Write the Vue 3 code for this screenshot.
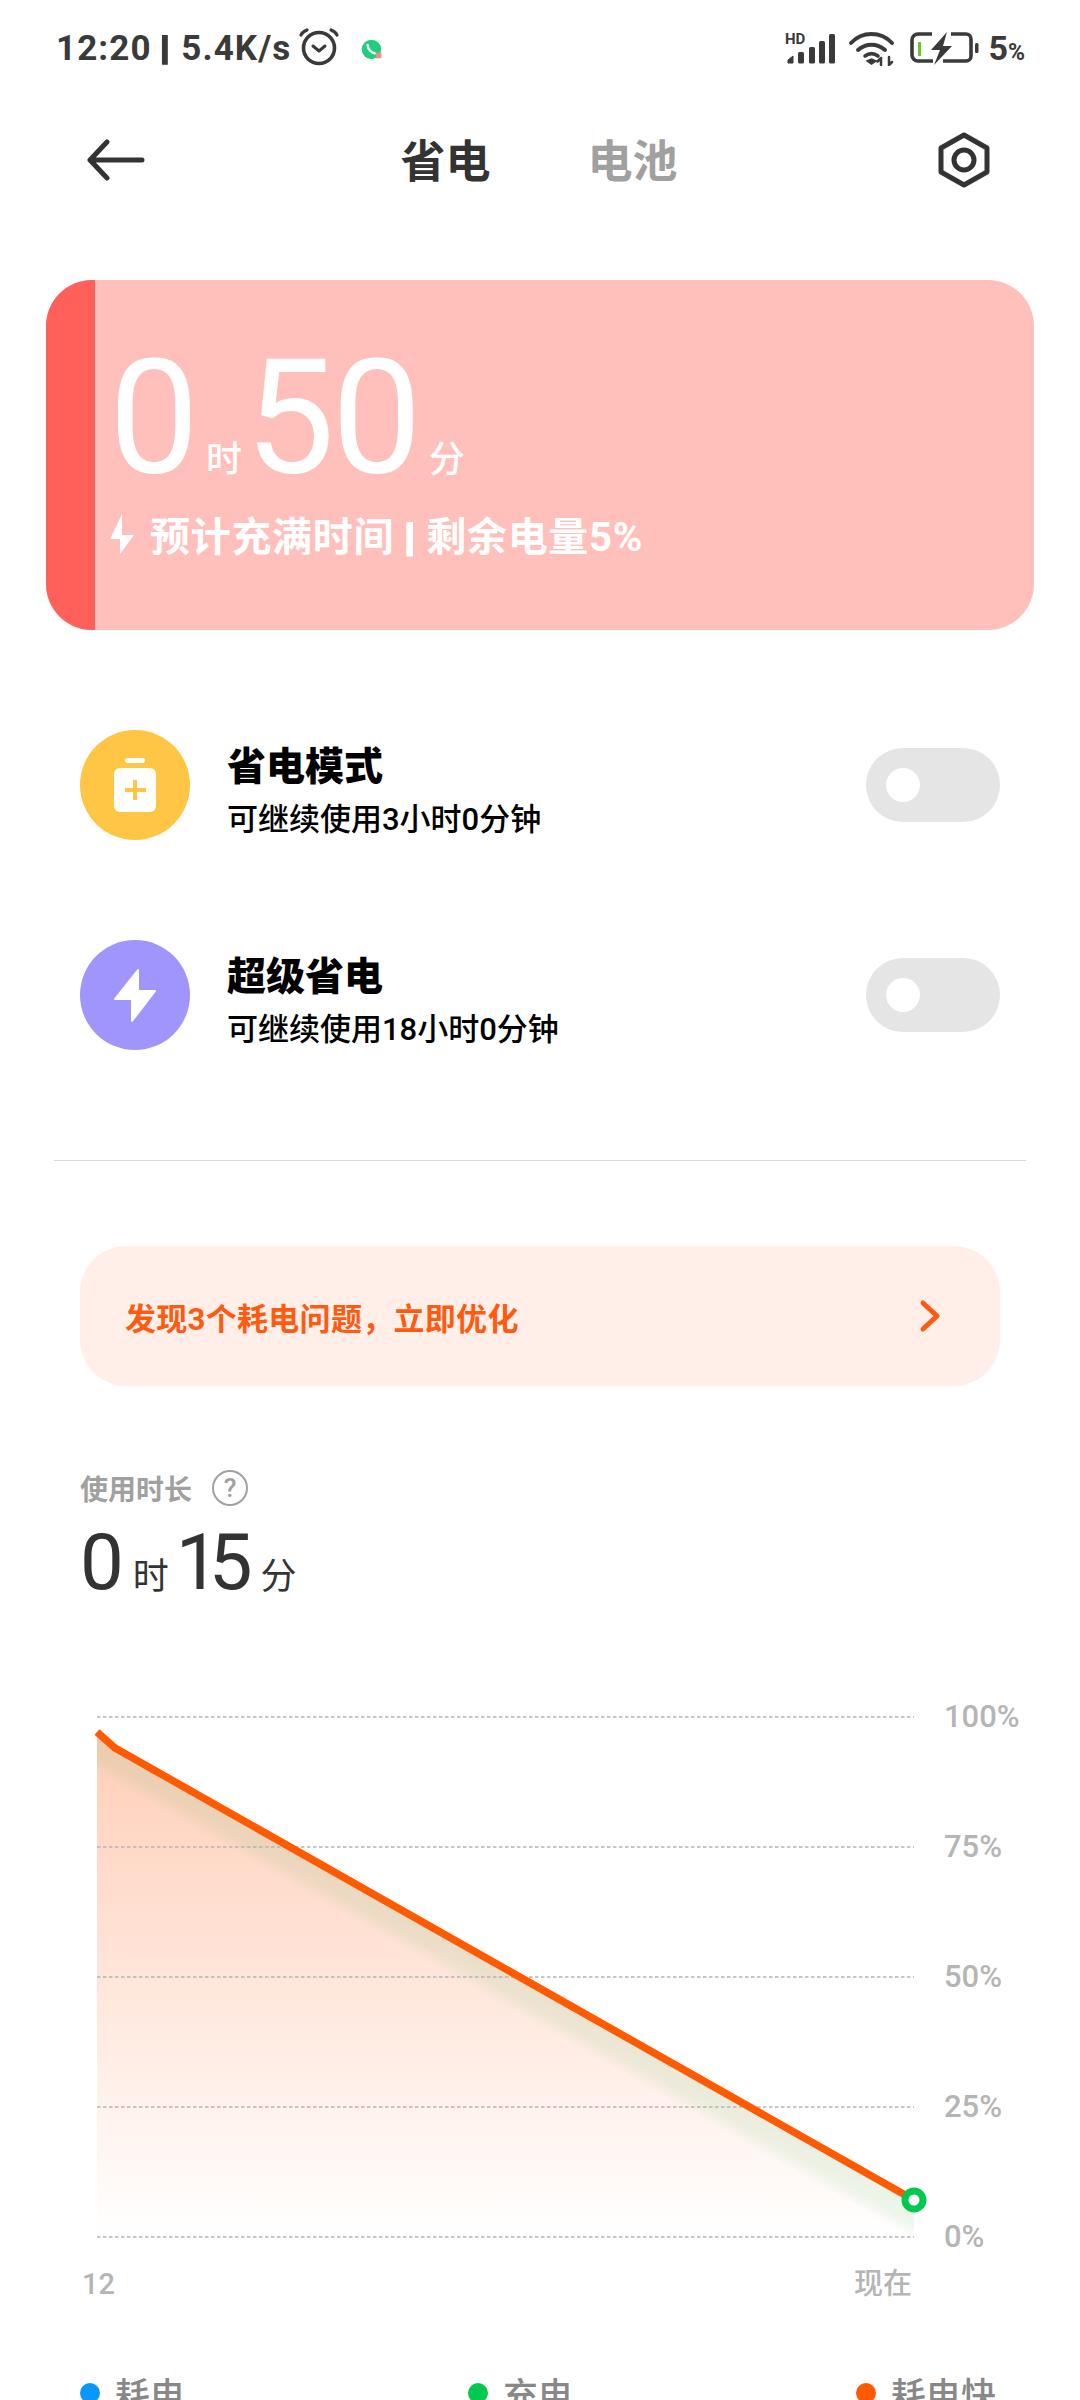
<script setup>
const rows = [
  { title: '省电模式', sub: '可继续使用3小时0分钟', color: '#ffc544', icon: 'plus' },
  { title: '超级省电', sub: '可继续使用18小时0分钟', color: '#a095fd', icon: 'bolt' },
];
const grid = [
  { y: 17, label: '100%' },
  { y: 147, label: '75%' },
  { y: 277, label: '50%' },
  { y: 407, label: '25%' },
  { y: 537, label: '0%' },
];
const legend = [
  { text: '耗电', color: '#0a96ff' },
  { text: '充电', color: '#00ca4e' },
  { text: '耗电快', color: '#ff5a00' },
];
</script>

<template>
  <div class="page">
    <div class="status">
      <div class="status-left">
        <span class="clock">12:20 <i class="sep">|</i> 5.4K/s</span>
        <svg class="alarm" width="42" height="40" viewBox="0 0 42 40" fill="none" stroke="#3a3a3a" stroke-linecap="round">
          <circle cx="21" cy="22" r="15.5" stroke-width="3.6" />
          <path d="M15 20l6 5 6-5" stroke-width="3" stroke-linejoin="round" />
          <path d="M3 9c1-2 3-4 6-5M39 9c-1-2-3-4-6-5" stroke-width="3.2" />
        </svg>
        <svg class="chat" width="22" height="22" viewBox="0 0 20 20">
          <circle cx="9.5" cy="9.5" r="8.8" fill="#1fcf7c" />
          <path d="M6 5.5c.5 3.5 3 6.5 6.500 7.500" fill="none" stroke="#fff" stroke-width="2.2" stroke-linecap="round" />
          <rect x="13.5" y="12.5" width="5" height="5" fill="#ee8f8a" />
        </svg>
      </div>
      <div class="status-right">
        <svg class="signal" width="52" height="34" viewBox="0 0 52 34">
          <text x="0" y="13" class="hd">HD</text>
          <path d="M3 32v-3l5-4v7z" fill="#3a3a3a" stroke="#3a3a3a" stroke-width="1" stroke-linejoin="round" />
          <rect x="13" y="21" width="6" height="11.500" rx="1.500" fill="#3a3a3a" />
          <rect x="24" y="16" width="6" height="16.500" rx="1.500" fill="#3a3a3a" />
          <rect x="34" y="10" width="6" height="22.500" rx="1.500" fill="#3a3a3a" />
          <rect x="44" y="3" width="6" height="29.500" rx="1.500" fill="#3a3a3a" />
        </svg>
        <svg class="wifi" width="48" height="36" viewBox="0 0 48 36" fill="none" stroke="#3a3a3a" stroke-width="4" stroke-linecap="round">
          <path d="M3 13C14 1 33 1 44 13" />
          <path d="M10 20c8-7 19-7 27 0" />
          <path d="M17 26c4-3 9-3 13 0" stroke-width="3.6" />
          <path d="M19 31l4.500 3 4.500-3-4.500-2z" fill="#3a3a3a" stroke-width="1.500" />
          <path d="M33 28v7M29.500 31.500L33 28M41 27v8M41 35l3-3" stroke-width="2.500" />
        </svg>
        <svg class="battery" width="70" height="34" viewBox="0 0 70 34" fill="none">
          <path d="M22 3H8a6 6 0 0 0-6 6v15a6 6 0 0 0 6 6h15M41 3h15a5 5 0 0 1 5 5v17a5 5 0 0 1-5 5H33" stroke="#3a3a3a" stroke-width="3.600" />
          <rect x="8" y="11" width="3" height="14" fill="#6cc52d" />
          <path d="M37 1L21 19h9l-6 15 18-19h-9z" fill="#3a3a3a" />
          <rect x="65" y="12" width="3.500" height="10" rx="1.500" fill="#3a3a3a" />
        </svg>
        <span class="pct">5<small>%</small></span>
      </div>
    </div>

    <div class="nav">
      <svg class="back" width="60" height="42" viewBox="0 0 60 42" fill="none" stroke="#333" stroke-width="5" stroke-linecap="round" stroke-linejoin="round">
        <path d="M56 21H4M21 3L4 21l17 18" />
      </svg>
      <div class="tabs">
        <span class="tab active">省电</span>
        <span class="tab">电池</span>
      </div>
      <svg class="gear" width="54" height="56" viewBox="0 0 54 56" fill="none" stroke="#333">
        <path d="M27 3l23 13v24L27 53 4 40V16z" stroke-width="5" stroke-linejoin="round" />
        <circle cx="27" cy="28" r="10" stroke-width="5" />
      </svg>
    </div>

    <div class="card">
      <div class="card-strip"></div>
      <div class="card-body">
        <div class="big-time">
          <span class="num">0</span><span class="unit">时</span><span class="num">50</span><span class="unit">分</span>
        </div>
        <div class="card-note">
          <svg width="26" height="40" viewBox="0 0 26 40">
            <path d="M13 0v21h12L11 40V25H1z" fill="#fff" />
          </svg>
          <span>预计充满时间 <i class="sep">|</i> 剩余电量5%</span>
        </div>
      </div>
    </div>

    <div class="rows">
      <div v-for="r in rows" :key="r.title" class="row">
        <div class="row-icon" :style="{ background: r.color }">
          <svg v-if="r.icon === 'plus'" width="44" height="54" viewBox="0 0 44 54">
            <rect x="12" y="0" width="20" height="5" rx="2.500" fill="#fff" />
            <rect x="1" y="10" width="42" height="44" rx="6" fill="#fff" />
            <path d="M22 22v20M12 32h21" stroke="#ffc544" stroke-width="4" />
          </svg>
          <svg v-else width="44" height="54" viewBox="0 0 44 54">
            <path d="M25 2L2 31h17v22l23-30H25z" fill="#fff" stroke="#fff" stroke-width="2" stroke-linejoin="round" />
          </svg>
        </div>
        <div class="row-text">
          <div class="row-title">{{ r.title }}</div>
          <div class="row-sub">{{ r.sub }}</div>
        </div>
        <div class="toggle"><span class="knob"></span></div>
      </div>
    </div>

    <div class="divider"></div>

    <div class="banner">
      <span>发现3个耗电问题，立即优化</span>
      <svg width="24" height="34" viewBox="0 0 24 34" fill="none" stroke="#ff5a10" stroke-width="5" stroke-linecap="round" stroke-linejoin="round">
        <path d="M5 4l14 13L5 30" />
      </svg>
    </div>

    <div class="usage">
      <div class="usage-label">
        <span>使用时长</span>
        <span class="help">?</span>
      </div>
      <div class="usage-time">
        <span class="num">0</span><span class="unit">时</span><span class="num tight">15</span><span class="unit">分</span>
      </div>
    </div>

    <svg class="chart" width="1080" height="620" viewBox="0 0 1080 620">
      <defs>
        <linearGradient id="area" x1="0" y1="0" x2="0" y2="1">
          <stop offset="0" stop-color="#ff5a10" stop-opacity="0.3" />
          <stop offset="1" stop-color="#ff5a10" stop-opacity="0" />
        </linearGradient>
        <linearGradient id="glow" gradientUnits="userSpaceOnUse" x1="500" y1="266" x2="484" y2="294">
          <stop offset="0" stop-color="#30b040" stop-opacity="0.1" />
          <stop offset="0.6" stop-color="#30b040" stop-opacity="0.085" />
          <stop offset="1" stop-color="#30b040" stop-opacity="0" />
        </linearGradient>
      </defs>
      <path d="M97 32L115 48L914 500V537H97z" fill="url(#area)" />
      <path d="M97 32L115 48L914 500V537L97 85z" fill="url(#glow)" />
      <template v-for="g in grid" :key="g.label">
        <line x1="97" x2="914" :y1="g.y" :y2="g.y" class="grid-line" />
        <text x="944" :y="g.y + 10" class="axis">{{ g.label }}</text>
      </template>
      <path d="M97 32L115 48L914 500" fill="none" stroke="#ff5a00" stroke-width="7.500" />
      <circle cx="914" cy="500" r="9" fill="#fff" stroke="#00ca4e" stroke-width="7" />
      <text x="82" y="594" class="axis small">12</text>
      <text x="854" y="594" class="axis small">现在</text>
    </svg>

    <div class="legend">
      <div v-for="l in legend" :key="l.text" class="legend-item">
        <span class="dot" :style="{ background: l.color }"></span>
        <span>{{ l.text }}</span>
      </div>
    </div>
  </div>
</template>

<style scoped>
.page {
  width: 1080px;
  height: 2400px;
  overflow: hidden;
  background: #fff;
  font-family: Roboto, "Noto Sans CJK SC", sans-serif;
}
.sep {
  display: inline-block;
  font-style: normal;
  transform: scaleX(2);
}
.status {
  height: 96px;
  padding: 0 55px 0 56px;
  display: flex;
  align-items: center;
  justify-content: space-between;
  color: #3a3a3a;
}
.status-left,
.status-right {
  display: flex;
  align-items: center;
}
.clock {
  font-size: 35px;
  font-weight: 700;
  letter-spacing: 1.1px;
  white-space: pre;
}
.alarm {
  margin-left: 7px;
  margin-top: -4px;
}
.chat {
  margin-left: 21px;
  margin-top: 4px;
}
.hd {
  font: 700 15px Roboto, sans-serif;
  fill: #3a3a3a;
}
.wifi {
  margin-left: 11px;
}
.battery {
  margin-left: 14px;
}
.pct {
  margin-left: 8px;
  font-size: 34px;
  font-weight: 700;
}
.pct small {
  font-size: 23px;
}
.nav {
  height: 128px;
  padding: 0 89px 0 86px;
  display: flex;
  align-items: center;
  justify-content: space-between;
}
.tabs {
  display: flex;
  gap: 97px;
  margin: -4px 5px 0 0;
}
.tab {
  font-size: 45px;
  font-weight: 700;
  color: #a0a0a0;
}
.tab.active {
  color: #333;
}
.card {
  margin: 56px 46px 0 46px;
  height: 350px;
  border-radius: 46px;
  overflow: hidden;
  display: flex;
  background: #ffbfba;
  color: #fff;
}
.card-strip {
  width: 49px;
  background: #ff615a;
}
.card-body {
  padding: 48px 0 0 14px;
}
.big-time {
  display: flex;
  align-items: baseline;
  height: 180px;
}
.big-time .num {
  font-size: 160px;
  line-height: 180px;
  font-weight: 400;
  letter-spacing: -3px;
}
.big-time .unit {
  font-size: 36px;
  font-weight: 500;
  margin: 0 3px 0 10px;
}
.card-note {
  margin-top: -3px;
  display: flex;
  align-items: center;
  gap: 15px;
  font-size: 40px;
  font-weight: 700;
  letter-spacing: 0.7px;
}
.rows {
  padding: 100px 80px 0;
  display: flex;
  flex-direction: column;
  gap: 100px;
}
.row {
  height: 110px;
  display: flex;
  align-items: center;
}
.row-icon {
  width: 110px;
  height: 110px;
  border-radius: 50%;
  display: flex;
  align-items: center;
  justify-content: center;
}
.row-text {
  flex: 1;
  margin-left: 37px;
  padding-top: 16px;
  color: #000;
}
.row-title {
  font-size: 39px;
  line-height: 54px;
  font-weight: 900;
}
.row-sub {
  font-size: 31px;
  line-height: 52px;
  font-weight: 500;
}
.toggle {
  width: 134px;
  height: 74px;
  border-radius: 37px;
  background: #e5e5e5;
  display: flex;
  align-items: center;
  padding-left: 20px;
  box-sizing: border-box;
}
.knob {
  width: 34px;
  height: 34px;
  border-radius: 50%;
  background: #fff;
}
.divider {
  margin: 110px 54px 0;
  height: 1px;
  background: #d9d9d9;
}
.banner {
  margin: 85px 80px 0;
  height: 140px;
  border-radius: 46px;
  background: #ffefe8;
  padding: 0 58px 0 45px;
  display: flex;
  align-items: center;
  justify-content: space-between;
  color: #ff5a10;
  font-size: 31px;
  font-weight: 700;
  letter-spacing: 0.3px;
}
.usage {
  margin: 84px 80px 0;
}
.usage-label {
  height: 36px;
  display: flex;
  align-items: center;
  gap: 20px;
  font-size: 28px;
  font-weight: 700;
  color: #a0a0a0;
}
.help {
  width: 36px;
  height: 36px;
  box-sizing: border-box;
  border: 2.5px solid #a0a0a0;
  border-radius: 50%;
  display: flex;
  align-items: center;
  justify-content: center;
  font-size: 26px;
  font-weight: 500;
}
.usage-time {
  display: flex;
  align-items: baseline;
  color: #333;
  height: 90px;
  padding-top: 12px;
}
.usage-time .num {
  font-size: 78px;
  line-height: 90px;
}
.usage-time .tight {
  letter-spacing: -11px;
  margin-left: -2px;
  margin-right: 10px;
}
.usage-time .unit {
  font-size: 36px;
  margin: 0 9px;
}
.chart {
  display: block;
  margin-top: 92px;
}
.grid-line {
  stroke: #b4b4b4;
  stroke-width: 1.500;
  stroke-dasharray: 3.500 2.500;
}
.axis {
  font-family: Roboto, "Noto Sans CJK SC", sans-serif;
  font-size: 31px;
  font-weight: 500;
  fill: #b5b5b5;
}
.axis.small {
  font-size: 29px;
}
.legend {
  margin-top: 47px;
  padding-left: 80px;
  display: grid;
  grid-template-columns: 388px 388px auto;
  font-size: 35px;
  font-weight: 500;
  color: #888;
}
.legend-item {
  display: flex;
  align-items: center;
  gap: 15px;
}
.dot {
  width: 20px;
  height: 20px;
  border-radius: 50%;
}
</style>
